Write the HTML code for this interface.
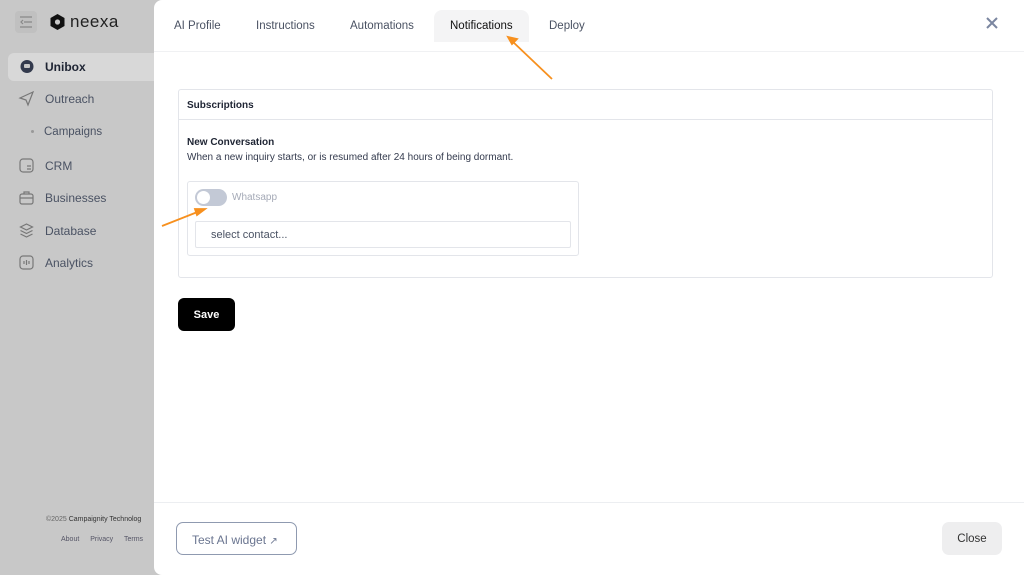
<!DOCTYPE html>
<html><head><style>
*{box-sizing:border-box;margin:0;padding:0}
body{width:1024px;height:575px;overflow:hidden;font-family:"Liberation Sans",sans-serif;background:#c8c8c8;position:relative}
.sb{position:absolute;left:0;top:0;width:160px;height:575px;color:#4a5263;font-size:12px}
.nav{position:absolute;left:18px;display:flex;align-items:center;gap:10px}
.nav svg{width:17px;height:17px}
.panel{position:absolute;left:154px;top:0;width:870px;height:575px;background:#fff;border-radius:8px 0 0 8px}
.tab{position:absolute;top:20px;font-size:11.5px;color:#4a5263}
.box{position:absolute;left:178px;top:89px;width:815px;height:189px;border:1px solid #e3e5ea;border-radius:3px}
</style></head><body>
<div class="sb">
 <div style="position:absolute;left:15px;top:11px;width:22px;height:22px;background:#c0c0c0;border-radius:4px"></div>
 <svg style="position:absolute;left:19px;top:15px" width="14" height="14" viewBox="0 0 14 14" stroke="#888" stroke-width="1.2" fill="none"><path d="M1 2h12M5 7h8M1 12h12M4 5L2 7l2 2"/></svg>
 <svg style="position:absolute;left:49px;top:13px" width="17" height="18" viewBox="0 0 17 18"><path d="M8.5 1l7 4v8l-7 4-7-4V5z" fill="#111"/><circle cx="8.5" cy="9" r="2.6" fill="#c8c8c8"/></svg>
 <div style="position:absolute;left:70px;top:12px;font-size:17px;color:#222;letter-spacing:.5px">neexa</div>
 <div style="position:absolute;left:8px;top:53px;width:152px;height:28px;background:#d8d8d8;border-radius:6px 0 0 6px"></div>
 <div class="nav" style="top:58px;color:#1e2433;font-weight:bold"><svg viewBox="0 0 17 17"><circle cx="9" cy="8.5" r="6.5" fill="#333a4d"/><rect x="6" y="6" width="6" height="4" rx="1" fill="#c8c8c8"/></svg>Unibox</div>
 <div class="nav" style="top:90px"><svg viewBox="0 0 17 17" fill="none" stroke="#777" stroke-width="1.2"><path d="M2 8l13-6-5 13-2-5z"/></svg>Outreach</div>
 <div style="position:absolute;left:31px;top:130px;width:3px;height:3px;border-radius:50%;background:#999"></div>
 <div style="position:absolute;left:44px;top:126px;font-size:11.5px">Campaigns</div>
 <div class="nav" style="top:157px"><svg viewBox="0 0 17 17" fill="none" stroke="#777" stroke-width="1.2"><rect x="2" y="2" width="13" height="13" rx="3"/><path d="M9 9h4M9 12h4"/></svg>CRM</div>
 <div class="nav" style="top:189px"><svg viewBox="0 0 17 17" fill="none" stroke="#777" stroke-width="1.2"><rect x="2" y="5" width="13" height="10" rx="2"/><path d="M6 5V3h5v2M2 9h13"/></svg>Businesses</div>
 <div class="nav" style="top:222px"><svg viewBox="0 0 17 17" fill="none" stroke="#777" stroke-width="1.2"><path d="M8.5 2l6 3-6 3-6-3zM2.5 8.5l6 3 6-3M2.5 12l6 3 6-3"/></svg>Database</div>
 <div class="nav" style="top:254px"><svg viewBox="0 0 17 17" fill="none" stroke="#777" stroke-width="1.2"><rect x="2" y="2" width="13" height="13" rx="3"/><path d="M6 7v3M8.5 6v5M11 7v3"/></svg>Analytics</div>
 <div style="position:absolute;left:46px;top:516px;font-size:7px;color:#666;white-space:nowrap">©2025 <span style="color:#333">Campaignity Technolog</span></div>
 <div style="position:absolute;left:61px;top:536px;font-size:7px;color:#556;word-spacing:9px">About Privacy Terms</div>
</div>
<div class="panel">
 <div style="position:absolute;left:280px;top:10px;width:95px;height:32px;background:#f4f4f5;border-radius:8px 8px 0 0"></div>
 <div class="tab" style="left:20px">AI Profile</div>
 <div class="tab" style="left:102px">Instructions</div>
 <div class="tab" style="left:196px">Automations</div>
 <div class="tab" style="left:296px;color:#111">Notifications</div>
 <div class="tab" style="left:395px">Deploy</div>
 <svg style="position:absolute;left:832px;top:17px" width="12" height="12" viewBox="0 0 12 12" stroke="#7b86a0" stroke-width="2"><path d="M1 1l10 10M11 1L1 11"/></svg>
 <div style="position:absolute;left:0;top:51px;width:870px;height:1px;background:#f0f1f3"></div>
 <div style="position:absolute;left:0;top:502px;width:870px;height:1px;background:#eceef1"></div>
 <div style="position:absolute;left:22px;top:522px;width:121px;height:33px;border:1px solid #8f9ab0;border-radius:7px;color:#6a7590;font-size:12px;padding:10px 0 0 15px">Test AI widget <span style="font-size:10px">↗</span></div>
 <div style="position:absolute;left:788px;top:522px;width:60px;height:33px;background:#eeeeef;border-radius:7px;font-size:11.5px;color:#333;text-align:center;line-height:34px">Close</div>
</div>
<div class="box">
 <div style="height:30px;border-bottom:1px solid #e3e5ea;font-size:10px;font-weight:bold;color:#1e2433;padding:10px 8px">Subscriptions</div>
 <div style="position:absolute;left:8px;top:47px;font-size:10px;font-weight:bold;color:#1e2433">New Conversation</div>
 <div style="position:absolute;left:8px;top:62px;font-size:10px;color:#333a4d">When a new inquiry starts, or is resumed after 24 hours of being dormant.</div>
 <div style="position:absolute;left:8px;top:91px;width:392px;height:75px;border:1px solid #e3e5ea;border-radius:3px">
  <div style="position:absolute;left:7px;top:7px;width:32px;height:17px;background:#c3c9d6;border-radius:9px"><div style="position:absolute;left:2px;top:2px;width:13px;height:13px;border-radius:50%;background:#fff"></div></div>
  <div style="position:absolute;left:44px;top:10px;font-size:10px;color:#a5aab7">Whatsapp</div>
  <div style="position:absolute;left:7px;top:39px;width:376px;height:27px;border:1px solid #e3e5ea;border-radius:2px;font-size:11px;color:#4a5263;padding:7px 15px">select contact...</div>
 </div>
</div>
<div style="position:absolute;left:178px;top:298px;width:57px;height:33px;background:#000;border-radius:6px;color:#fff;font-size:11px;font-weight:bold;text-align:center;line-height:34px">Save</div>
<svg style="position:absolute;left:0;top:0" width="1024" height="575">
 <g stroke="#f7901e" stroke-width="1.8" fill="#f7901e">
  <line x1="552" y1="79" x2="512" y2="41"/><path d="M508 37l9 2-5 5z"/>
  <line x1="162" y1="226" x2="200" y2="211"/><path d="M205 209l-8 6-2-6z"/>
 </g>
</svg>
</body></html>
